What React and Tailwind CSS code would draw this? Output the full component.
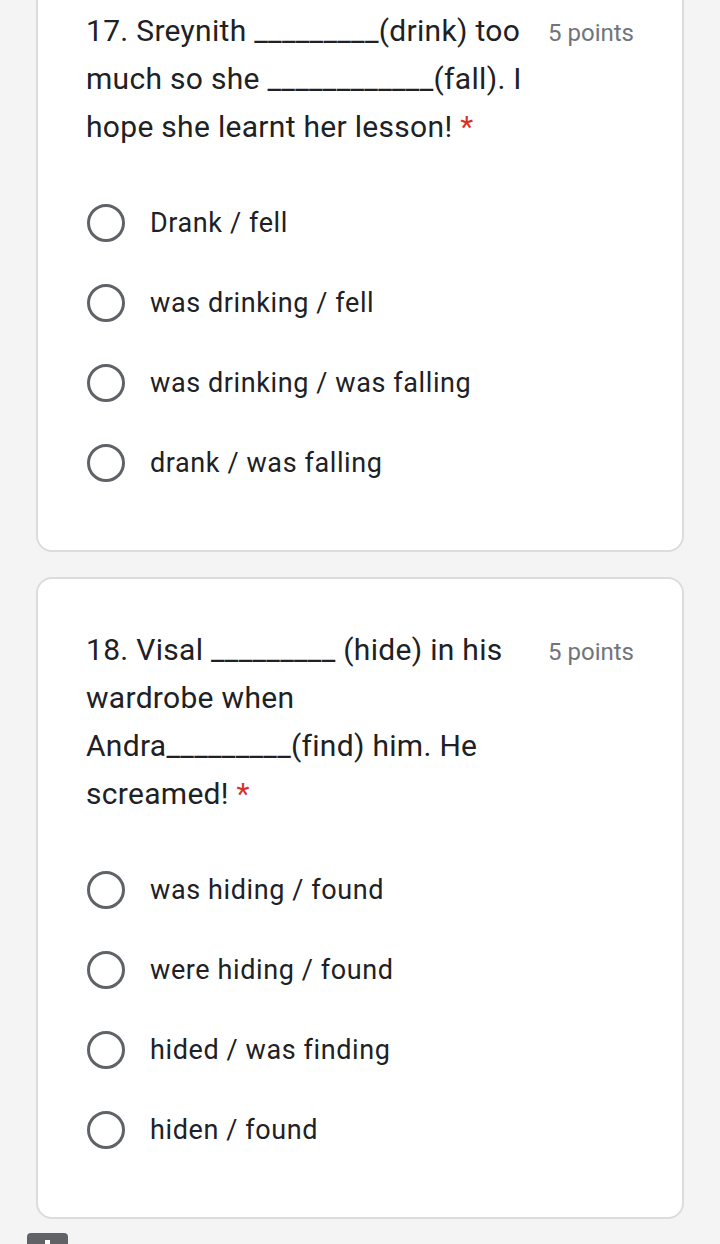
const questions = [
  {
    lines: ['17. Sreynith _________(drink) too', 'much so she ____________(fall). I', 'hope she learnt her lesson!'],
    options: ['Drank / fell', 'was drinking / fell', 'was drinking / was falling', 'drank / was falling'],
  },
  {
    lines: ['18. Visal _________ (hide) in his', 'wardrobe when', 'Andra_________(find) him. He', 'screamed!'],
    options: ['was hiding / found', 'were hiding / found', 'hided / was finding', 'hiden / found'],
  },
];

function Radio({ label }) {
  return (
    <div className="flex h-[80px] items-center">
      <span className="h-[38px] w-[38px] shrink-0 rounded-full border-[3px] border-[#5f6368]" />
      <span className="ml-[25px] text-[27px] tracking-[0.6px] text-[#202124]">{label}</span>
    </div>
  );
}

function QuestionCard({ q }) {
  return (
    <div className="rounded-[16px] border-2 border-[#dadce0] bg-white px-[48px] pt-[47px] pb-[47px]">
      <div className="flex items-start justify-between">
        <div className="text-[30px] leading-[48px] tracking-[0.3px] text-[#202124]">
          {q.lines.map((line, i) => (
            <div key={i} className="whitespace-pre">
              {line}
              {i === q.lines.length - 1 && <span className="text-[#d93025]"> *</span>}
            </div>
          ))}
        </div>
        <div className="mt-[2px] text-[24px] leading-[48px] text-[#70757a]">5 points</div>
      </div>
      <div className="mt-[32px] ml-[1px]">
        {q.options.map((o) => (
          <Radio key={o} label={o} />
        ))}
      </div>
    </div>
  );
}

export default function App() {
  return (
    <div className="h-[1244px] overflow-hidden bg-[#f4f4f4]" style={{ fontFamily: 'Roboto, "Liberation Sans", sans-serif' }}>
      <div className="mx-[36px] -mt-[42px] flex flex-col gap-[25px]">
        {questions.map((q, i) => (
          <QuestionCard key={i} q={q} />
        ))}
      </div>
      <div className="ml-[27px] mt-[14px] flex h-[20px] w-[41px] justify-center rounded-t-[4px] bg-[#5f6368]">
        <span className="mt-[7px] h-[4px] w-[5px] bg-white" />
      </div>
    </div>
  );
}
